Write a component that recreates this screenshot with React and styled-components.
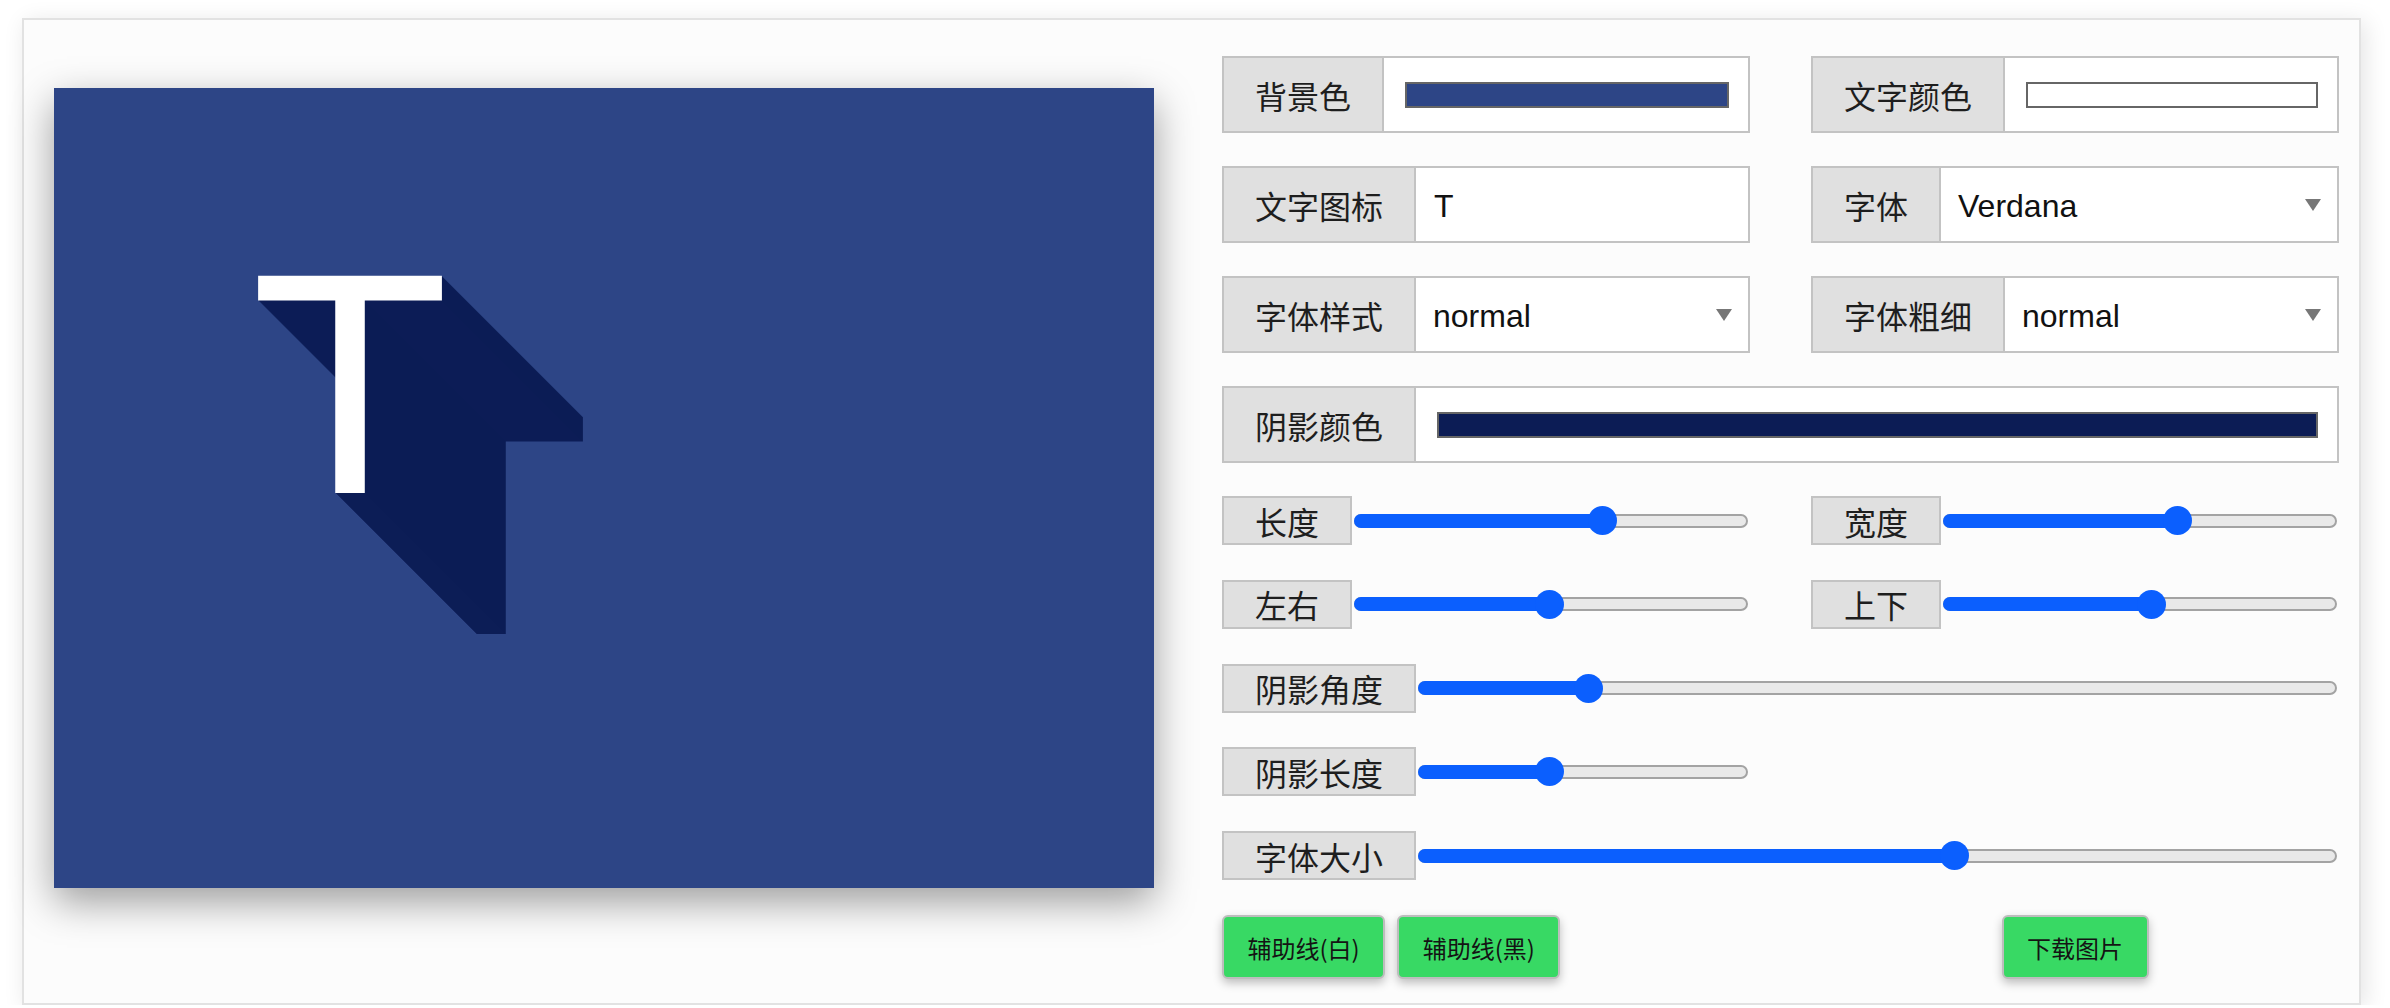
import React from "react";
import styled, { createGlobalStyle } from "styled-components";

const GlobalStyle = createGlobalStyle`
  html, body { margin: 0; padding: 0; background: #ffffff; overflow: hidden; }
  body { font-family: "Noto Sans CJK SC", "Noto Sans", sans-serif; color: #1c1c1c; }
  * { box-sizing: border-box; }
`;

const BLUE = "#0b5ffe";
const BORDER = "#c3c3c3";

const longShadow = (color, n) =>
  Array.from({ length: n }, (_, i) => `${i + 1}px ${i + 1}px 0 ${color}`).join(",");

const Frame = styled.div`
  margin: 18px 0 0 22px;
  width: 2339px;
  height: 987px;
  border: 2px solid #e2e2e2;
  background: #fcfcfc;
  box-shadow: 4px 4px 22px rgba(0, 0, 0, 0.11);
  display: flex;
  align-items: flex-start;
  gap: 68px;
  padding: 36px 20px 0 30px;
`;

const Preview = styled.div`
  position: relative;
  flex: none;
  width: 1100px;
  height: 800px;
  margin-top: 32px;
  background: ${(p) => p.$bg};
  box-shadow: 0 14px 38px rgba(0, 0, 0, 0.38);
  overflow: hidden;
`;

const IconText = styled.div`
  position: absolute;
  left: 205px;
  top: 153px;
  font-family: "DejaVu Sans", sans-serif;
  font-size: 298px;
  line-height: 1;
  color: ${(p) => p.$color};
  text-shadow: ${(p) => longShadow(p.$shadow, p.$len)};
`;

const Panel = styled.div`
  width: 1117px;
  flex: none;
  display: flex;
  flex-direction: column;
`;

const TwoCol = styled.div`
  display: grid;
  grid-template-columns: 528px 528px;
  column-gap: 61px;
  row-gap: ${(p) => p.$rowGap || "33px"};
  margin-bottom: ${(p) => p.$after || "0px"};
`;

const Group = styled.div`
  display: flex;
  align-items: stretch;
  height: 77px;
  border: 2px solid ${BORDER};
  background: #ffffff;
  grid-column: ${(p) => (p.$full ? "1 / -1" : "auto")};
`;

const GroupLabel = styled.div`
  flex: none;
  display: flex;
  align-items: center;
  padding: 0 31px;
  background: #e0e0e0;
  border-right: 2px solid ${BORDER};
  font-size: 32px;
  color: #1e1e1e;
`;

const Swatch = styled.div`
  flex: 1;
  align-self: center;
  height: 26px;
  margin: 0 19px 0 21px;
  border: 2px solid #666666;
  background: ${(p) => p.$color};
`;

const ValueBox = styled.div`
  flex: 1;
  display: flex;
  align-items: center;
  justify-content: space-between;
  padding: 0 16px 0 ${(p) => (p.$input ? "18px" : "17px")};
`;

const ValueText = styled.span`
  margin-top: 4px;
  font-family: "Liberation Sans", "Noto Sans CJK SC", sans-serif;
  font-size: 32px;
  color: #111;
`;

const Arrow = () => (
  <svg width="16" height="12" viewBox="0 0 16 12">
    <polygon points="0,0 16,0 8,12" fill="#777777" />
  </svg>
);

const SliderRow = styled.div`
  display: flex;
  align-items: center;
  height: 49px;
  grid-column: ${(p) => (p.$full ? "1 / -1" : "auto")};
`;

const SliderLabel = styled.div`
  flex: none;
  height: 49px;
  display: flex;
  align-items: center;
  padding: 0 31px;
  border: 2px solid ${BORDER};
  background: #e0e0e0;
  font-size: 32px;
  color: #1e1e1e;
`;

const TrackArea = styled.div`
  position: relative;
  flex: 1;
  height: 29px;
  margin: 0 2px 0 2px;
`;

const Rail = styled.div`
  position: absolute;
  left: 0;
  right: 0;
  top: 7.5px;
  height: 14px;
  border-radius: 7px;
  border: 2px solid #a3a3a3;
  background: #e9e9e9;
`;

const Fill = styled.div`
  position: absolute;
  left: 0;
  top: 7.5px;
  height: 14px;
  border-radius: 7px;
  background: ${BLUE};
`;

const Thumb = styled.div`
  position: absolute;
  top: 0;
  width: 29px;
  height: 29px;
  border-radius: 50%;
  background: ${BLUE};
`;

const Slider = ({ label, value, full }) => (
  <SliderRow $full={full}>
    <SliderLabel>{label}</SliderLabel>
    <TrackArea>
      <Rail />
      <Fill style={{ width: `calc(14.5px + ${value} * (100% - 29px))` }} />
      <Thumb style={{ left: `calc(${value} * (100% - 29px))` }} />
    </TrackArea>
  </SliderRow>
);

const ButtonCell = styled.div`
  display: flex;
  gap: 12px;
  justify-content: ${(p) => (p.$center ? "center" : "flex-start")};
`;

const GreenButton = styled.button`
  height: 64px;
  padding: 0 23.5px;
  border: 2px solid #bdbdbd;
  border-radius: 6px;
  background: #38d964;
  color: #141414;
  font-family: "Noto Sans CJK SC", sans-serif;
  font-size: 24px;
  box-shadow: 0 4px 10px rgba(0, 0, 0, 0.25);
  cursor: pointer;
`;

export default function App() {
  return (
    <>
      <GlobalStyle />
      <Frame>
        <Preview $bg="#2d4586">
          <IconText $color="#ffffff" $shadow="#0c1d56" $len={141}>
            T
          </IconText>
        </Preview>
        <Panel>
          <TwoCol $after="33px">
            <Group>
              <GroupLabel>背景色</GroupLabel>
              <Swatch $color="#2d4586" />
            </Group>
            <Group>
              <GroupLabel>文字颜色</GroupLabel>
              <Swatch $color="#ffffff" />
            </Group>
            <Group>
              <GroupLabel>文字图标</GroupLabel>
              <ValueBox $input>
                <ValueText>T</ValueText>
              </ValueBox>
            </Group>
            <Group>
              <GroupLabel>字体</GroupLabel>
              <ValueBox>
                <ValueText>Verdana</ValueText>
                <Arrow />
              </ValueBox>
            </Group>
            <Group>
              <GroupLabel>字体样式</GroupLabel>
              <ValueBox>
                <ValueText>normal</ValueText>
                <Arrow />
              </ValueBox>
            </Group>
            <Group>
              <GroupLabel>字体粗细</GroupLabel>
              <ValueBox>
                <ValueText>normal</ValueText>
                <Arrow />
              </ValueBox>
            </Group>
            <Group $full>
              <GroupLabel>阴影颜色</GroupLabel>
              <Swatch $color="#0c1c55" />
            </Group>
          </TwoCol>
          <TwoCol $rowGap="34.8px" $after="35px">
            <Slider label="长度" value={0.642} />
            <Slider label="宽度" value={0.603} />
            <Slider label="左右" value={0.495} />
            <Slider label="上下" value={0.532} />
            <Slider label="阴影角度" value={0.175} full />
            <Slider label="阴影长度" value={0.389} />
            <div />
            <Slider label="字体大小" value={0.586} full />
          </TwoCol>
          <TwoCol>
            <ButtonCell>
              <GreenButton>辅助线(白)</GreenButton>
              <GreenButton>辅助线(黑)</GreenButton>
            </ButtonCell>
            <ButtonCell $center>
              <GreenButton>下载图片</GreenButton>
            </ButtonCell>
          </TwoCol>
        </Panel>
      </Frame>
    </>
  );
}
